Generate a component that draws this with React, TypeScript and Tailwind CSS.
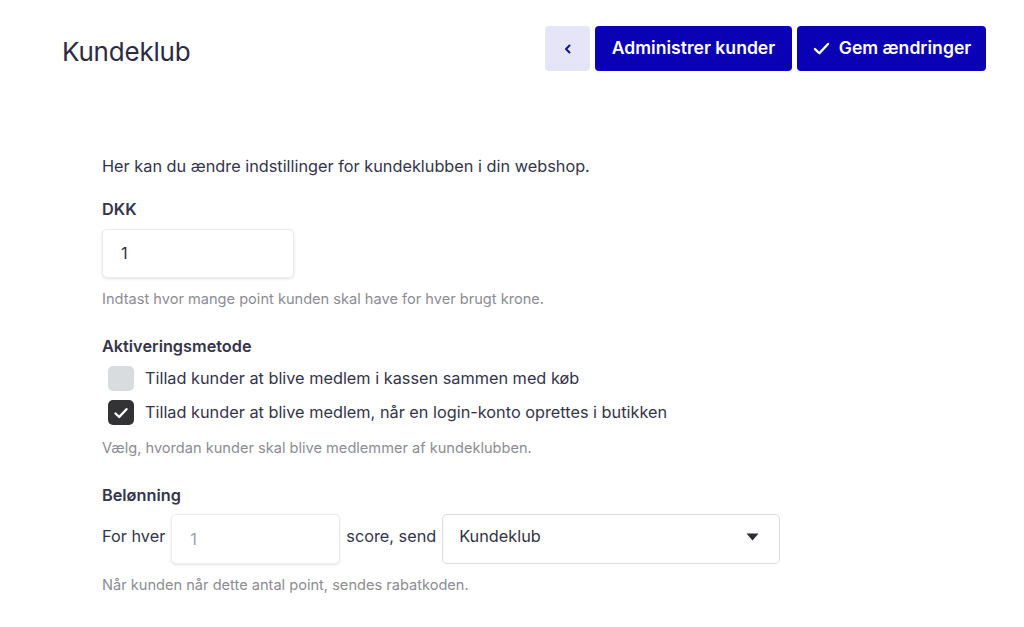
import React from "react";

function ChevronLeft() {
  return (
    <svg width="10" height="12" viewBox="0 0 10 12" fill="none">
      <path d="M6.5 2.5 L3 6 L6.5 9.5" stroke="#15137a" strokeWidth="2" strokeLinecap="round" strokeLinejoin="round" />
    </svg>
  );
}

function Check({ size = 16, color = "white", width = 2.2 }: { size?: number; color?: string; width?: number }) {
  return (
    <svg width={size} height={size} viewBox="0 0 16 16" fill="none">
      <path d="M2.5 8.5 L6.2 12 L13.5 4.2" stroke={color} strokeWidth={width} strokeLinecap="round" strokeLinejoin="round" />
    </svg>
  );
}

export default function App() {
  return (
    <div className="min-h-[627px] w-[1024px] bg-white text-[#35344a]" style={{ fontFamily: "Inter, 'Noto Sans', sans-serif" }}>
      {/* header */}
      <div className="flex items-center justify-between pl-[62px] pr-[38px] pt-[26px]">
        <h1 className="mt-[6px] text-[26px] font-normal text-[#2d2b42] tracking-[-0.2px]">Kundeklub</h1>
        <div className="flex gap-[5px]">
          <button className="flex h-[45px] w-[45px] items-center justify-center rounded-[4px] bg-[#e5e5f7]">
            <ChevronLeft />
          </button>
          <button className="h-[45px] w-[197px] rounded-[4px] bg-[#0a00b4] text-[17.6px] font-semibold text-white">
            Administrer kunder
          </button>
          <button className="flex h-[45px] w-[189px] items-center justify-center gap-[8px] rounded-[4px] bg-[#0a00b4] text-[17.6px] font-semibold text-white">
            <Check size={19} width={2} />
            Gem ændringer
          </button>
        </div>
      </div>

      {/* settings form */}
      <div className="pl-[102px] pt-[83px] text-[16.3px]">
        <p className="leading-[24px]">Her kan du ændre indstillinger for kundeklubben i din webshop.</p>

        <div className="mt-[21px] font-semibold leading-[20px]">DKK</div>
        <div className="mt-[10px] flex h-[49px] w-[192px] items-center rounded-[5px] border border-[#ececec] bg-white pl-[18px] text-[#33323f] shadow-[0_1px_3px_rgba(0,0,0,0.12)]">
          1
        </div>
        <p className="mt-[12px] text-[14.6px] leading-[18px] text-[#8c8c93]">Indtast hvor mange point kunden skal have for hver brugt krone.</p>

        <div className="mt-[28px] font-semibold leading-[20px]">Aktiveringsmetode</div>
        <div className="mt-[10px] flex flex-col gap-[9px] pl-[6px]">
          <label className="flex items-center gap-[11px]">
            <span className="h-[25px] w-[26px] rounded-[5px] bg-[#d9dcde]" />
            Tillad kunder at blive medlem i kassen sammen med køb
          </label>
          <label className="flex items-center gap-[11px]">
            <span className="flex h-[25px] w-[26px] items-center justify-center rounded-[5px] bg-[#333335]">
              <Check size={16} width={2.4} />
            </span>
            Tillad kunder at blive medlem, når en login-konto oprettes i butikken
          </label>
        </div>
        <p className="mt-[14px] text-[14.6px] leading-[18px] text-[#8c8c93]">Vælg, hvordan kunder skal blive medlemmer af kundeklubben.</p>

        <div className="mt-[28px] font-semibold leading-[20px]">Belønning</div>
        <div className="mt-[9px] flex items-start gap-[6px]">
          <span className="pt-[10px]">For hver</span>
          <div className="flex h-[50px] w-[169px] items-center rounded-[5px] border border-[#ececec] bg-white pl-[18px] text-[#a3a3ab] shadow-[0_1px_3px_rgba(0,0,0,0.10)]">
            1
          </div>
          <span className="pt-[10px]">score, send</span>
          <div className="flex h-[50px] w-[338px] items-center justify-between rounded-[5px] border border-[#dcdcdf] bg-white pl-[16px] pr-[20px] text-[#33323f]">
            <span className="-mt-[6px]">Kundeklub</span>
            <svg width="13" height="8" viewBox="0 0 13 8" className="-mt-[4px]">
              <path d="M0.5 0.5 H12.5 L6.5 7.5 Z" fill="#2b2b33" />
            </svg>
          </div>
        </div>
        <p className="mt-[12px] text-[14.6px] leading-[18px] text-[#8c8c93]">Når kunden når dette antal point, sendes rabatkoden.</p>
      </div>
    </div>
  );
}
